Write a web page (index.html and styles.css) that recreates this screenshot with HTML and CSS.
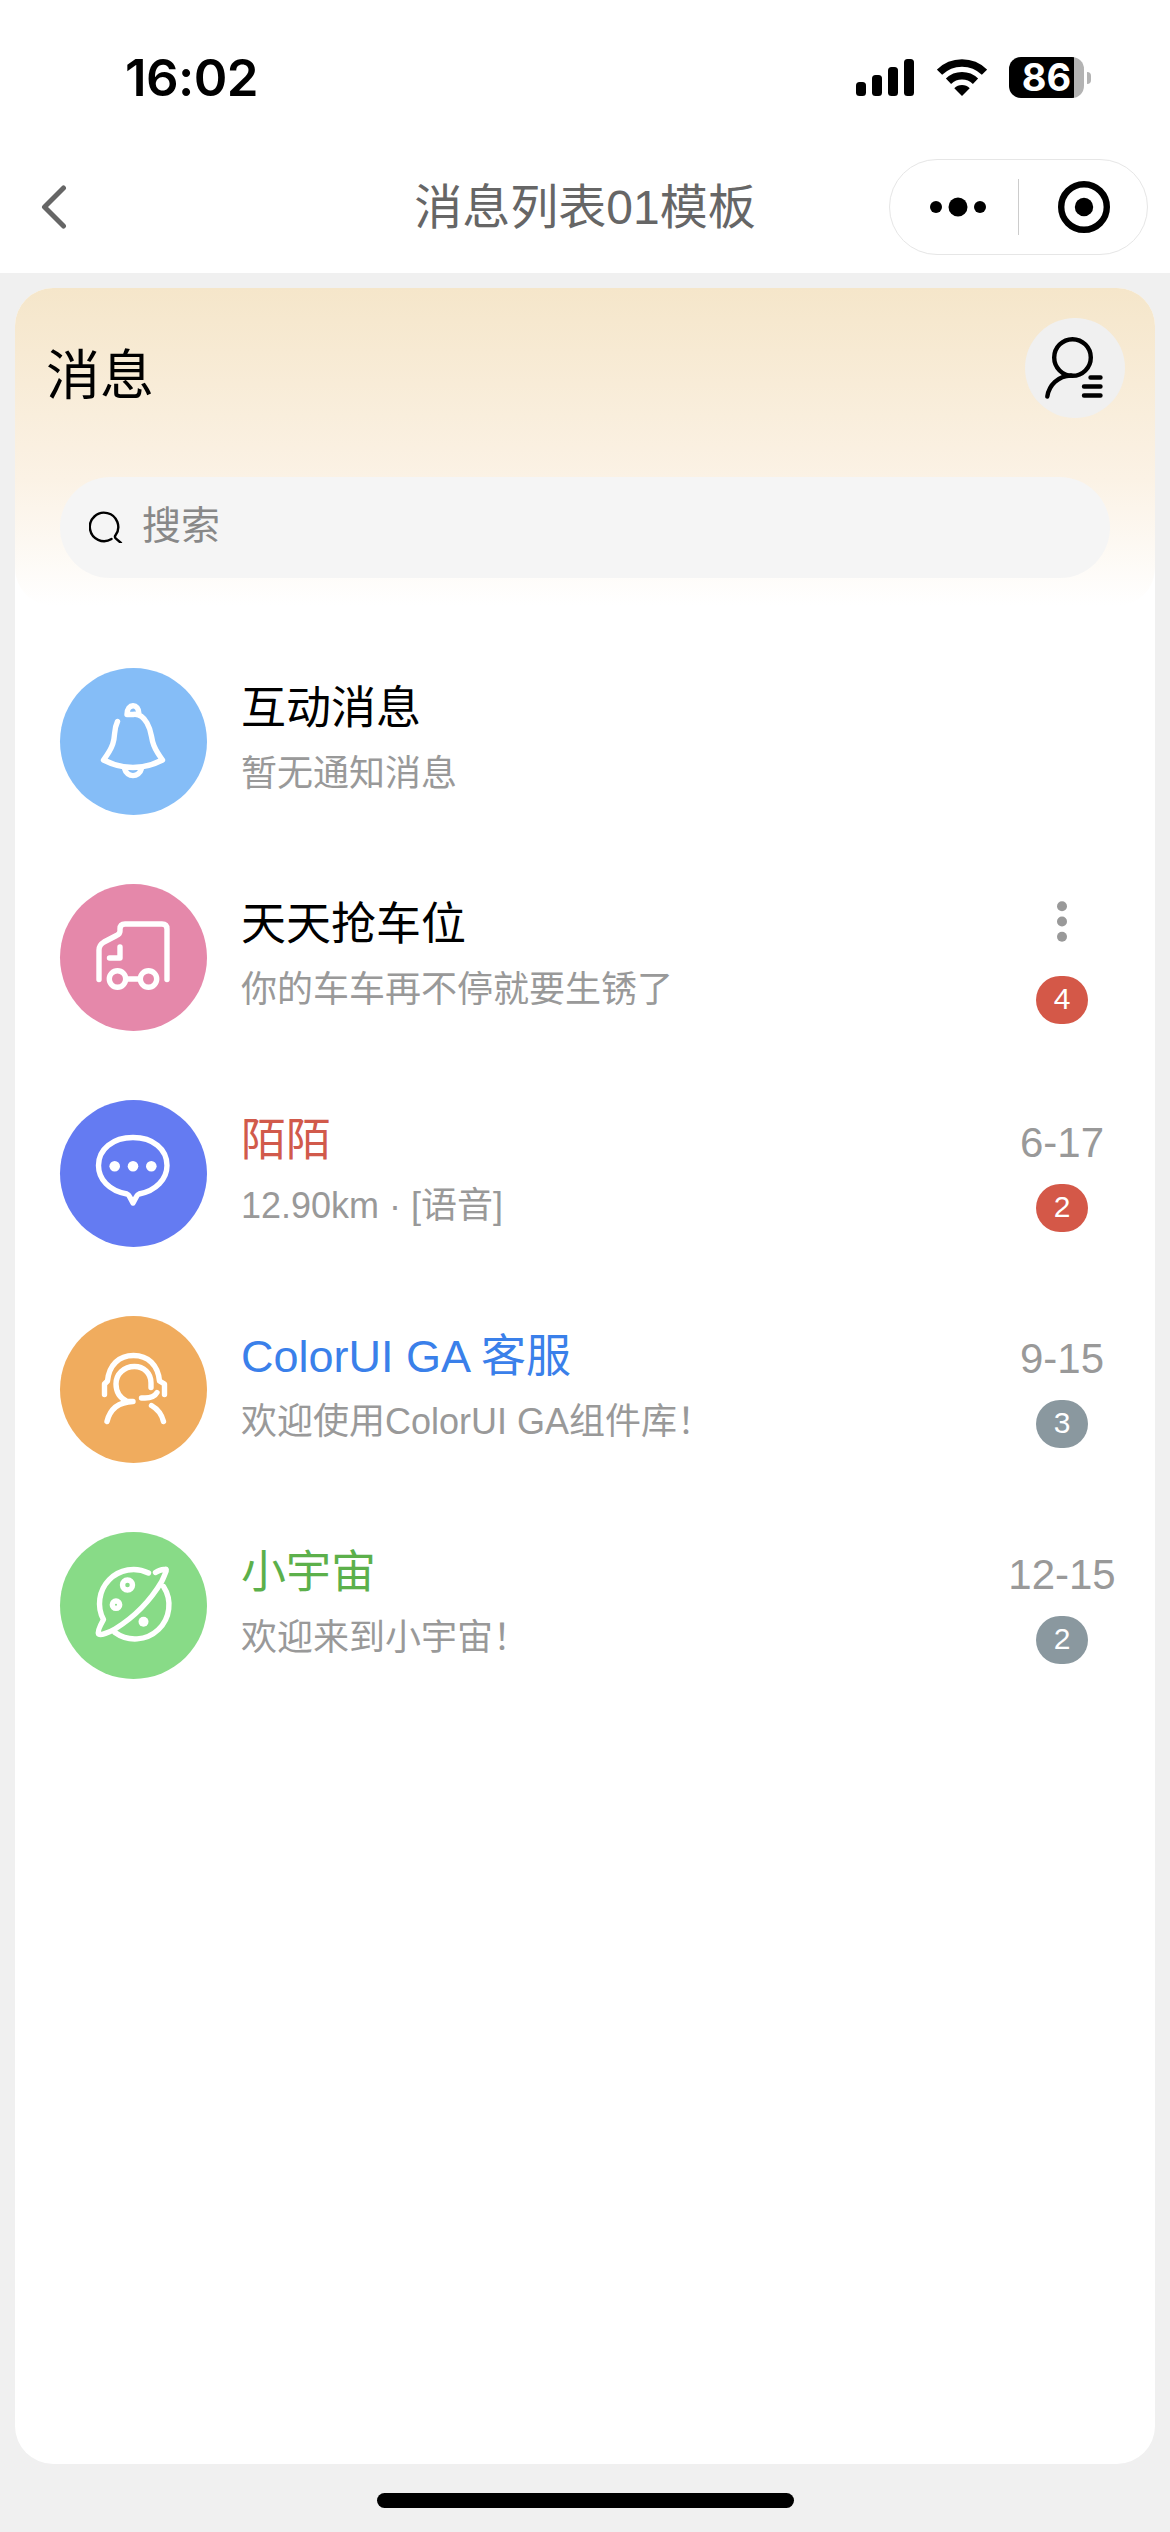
FILE: index.html
```html
<!DOCTYPE html>
<html lang="zh-CN">
<head>
<meta charset="utf-8">
<meta name="viewport" content="width=device-width, initial-scale=1">
<title>消息列表01模板</title>
<link rel="stylesheet" href="styles.css">
</head>
<body>
<div class="app">
  <header class="top">
    <div class="status-bar">
      <span class="clock">16:02</span>
      <div class="status-icons">
        <svg class="signal" width="58" height="37" viewBox="0 0 58 37"><rect y="23" width="10" height="14" rx="3.5"/><rect x="16" y="16" width="10" height="21" rx="3.5"/><rect x="32" y="8" width="10" height="29" rx="3.5"/><rect x="48" width="10" height="37" rx="3.5"/></svg>
        <svg class="wifi" width="50" height="37" viewBox="0 0 50 37"><g fill="none" stroke="#000" stroke-width="7.5"><path d="M2.5 13.2A32 32 0 0 1 47.5 13.2"/><path d="M11.5 22.3A19.5 19.5 0 0 1 38.5 22.3"/></g><path d="M25 37L17.3 29.2A11 11 0 0 1 32.7 29.2Z"/></svg>
        <div class="battery"><span class="battery-body">86</span><span class="battery-tip"></span></div>
      </div>
    </div>
    <div class="nav-bar">
      <svg class="back" width="26" height="46" viewBox="0 0 26 46"><path d="M22.5 4L3.5 23L22.5 42"/></svg>
      <h1 class="nav-title">消息列表01模板</h1>
      <div class="capsule">
        <svg class="more" width="52" height="22" viewBox="0 0 52 22"><circle cx="4" cy="11" r="6"/><circle cx="26" cy="11" r="9.5"/><circle cx="48" cy="11" r="6"/></svg>
        <span class="divider"></span>
        <svg class="target" width="52" height="52" viewBox="0 0 52 52"><circle cx="26" cy="26" r="22.8" fill="none" stroke="#000" stroke-width="6.4"/><circle cx="26" cy="26" r="9.2"/></svg>
      </div>
    </div>
  </header>

  <main class="card">
    <section class="banner">
      <div class="banner-row">
        <h2 class="banner-title">消息</h2>
        <div class="contact">
          <svg width="100" height="100" viewBox="0 0 100 100"><circle cx="47.5" cy="39.5" r="18.3"/><path d="M46 57.5C33 58 24 67 22.3 78.5M65.500 59.500H75.500M59 68.500H75.500M59 77.500H75.500"/></svg>
        </div>
      </div>
      <div class="search">
        <svg width="34" height="34" viewBox="0 0 34 34"><path d="M22.500 30A14.200 14.200 0 1 1 26.500 26.300Q25.200 28 27 29.700L32 34"/></svg>
        <span>搜索</span>
      </div>
    </section>

    <ul class="list">
      <li class="item">
        <span class="icon blue"><svg viewBox="0 0 147 147"><path d="M57.500 53.500C51 67 60 70 43.500 92Q73 107 102.500 92C87 71 95 69 87 55Q81 45 73 46.500H67C67 35 79 35 79 46M64.500 100.500C67 110 79 110 81.500 100.500"/></svg></span>
        <div class="body"><h3>互动消息</h3><p>暂无通知消息</p></div>
      </li>
      <li class="item">
        <span class="icon pink"><svg viewBox="0 0 147 147"><path d="M39 95.500V66Q39 61 44 58L56.500 51.500Q60 50 60 47V45Q60 40 65 40H102Q107 40 107 45V95.500M60 63V74H49.500M68 95H78"/><circle cx="57.500" cy="95" r="8.200"/><circle cx="88.500" cy="95" r="8.200"/></svg></span>
        <div class="body"><h3>天天抢车位</h3><p>你的车车再不停就要生锈了</p></div>
        <div class="meta"><svg class="dots" width="10" height="41" viewBox="0 0 10 41"><circle cx="5" cy="5.300" r="5"/><circle cx="5" cy="20.500" r="5"/><circle cx="5" cy="35.700" r="5"/></svg><span class="badge red">4</span></div>
      </li>
      <li class="item">
        <span class="icon indigo"><svg viewBox="0 0 147 147"><path d="M67 94C49 91 38.500 79 38.500 65.500C38.500 49 53 37.500 73 37.500S107 49 107 65.500C107 79 96 91 79 94Q77.500 94.500 76.500 96.500L73 103L69.500 96.500Q68.500 94.500 67 94Z"/><g class="solid"><circle cx="54.700" cy="66.200" r="5.300"/><circle cx="73" cy="66.200" r="5.300"/><circle cx="91.300" cy="66.200" r="5.300"/></g></svg></span>
        <div class="body"><h3 class="t-red">陌陌</h3><p>12.90km · [语音]</p></div>
        <div class="meta"><time>6-17</time><span class="badge red">2</span></div>
      </li>
      <li class="item">
        <span class="icon orange"><svg viewBox="0 0 147 147"><path d="M44.500 78.500V68L47.500 65C49 49 59 39.500 73.500 39.500S98 49 99.500 65L104.500 68V78.500M91 71.500V67C91 57 83.500 50.500 74.500 50.500C64 50.500 56 58 56 68C56 76 60 82 67 85.500H73M47 105.500C50 93 59 86 73 85.500M81.500 82H85Q94 82 97 76.500M91.500 89.500Q101 95 103.500 105.500"/></svg></span>
        <div class="body"><h3 class="t-blue">ColorUI GA 客服</h3><p>欢迎使用ColorUI GA组件库！</p></div>
        <div class="meta"><time>9-15</time><span class="badge grey">3</span></div>
      </li>
      <li class="item">
        <span class="icon green"><svg viewBox="0 0 147 147"><path d="M88.500 41A34 34 0 0 0 43.500 87.500C41 92 37 99 38.500 102C40 104 50 100 55 97C76 84 92 66 102 49C106 40 108 36 104.500 37.500C101 37 98.500 38.500 95.500 40.500M103.500 54.500A34 34 0 0 1 55 100.500"/><circle cx="67.500" cy="53" r="5"/><circle cx="56" cy="72.700" r="3.700"/><circle class="solid" cx="83.500" cy="89.800" r="5"/></svg></span>
        <div class="body"><h3 class="t-green">小宇宙</h3><p>欢迎来到小宇宙！</p></div>
        <div class="meta"><time>12-15</time><span class="badge grey">2</span></div>
      </li>
    </ul>
  </main>
  <footer class="home"><span class="home-indicator"></span></footer>
</div>
</body>
</html>
```

FILE: styles.css
```css
* { box-sizing: border-box; margin: 0; padding: 0; }
body {
  background: #f0f0f0;
  font-family: "Liberation Sans", "Noto Sans CJK SC", sans-serif;
}
svg { display: block; flex: none; }
h1, h2, h3 { font-weight: 400; }

.app { display: flex; flex-direction: column; width: 1170px; height: 2532px; overflow: hidden; }

.top { height: 273px; background: #fff; }
.status-bar { display: flex; justify-content: space-between; height: 141px; padding: 57px 79px 0 125px; }
.clock { font: 600 51px/42px Inter, sans-serif; letter-spacing: -0.6px; }
.status-icons { display: flex; align-items: flex-start; }
.signal { margin: 2px 23px 0 0; }
.wifi { margin: 2px 22px 0 0; }
.battery { display: flex; align-items: center; gap: 3px; }
.battery-body {
  width: 75px; height: 41px; border-radius: 12px;
  background: linear-gradient(90deg, #000 65px, #b3b3b3 65px);
  color: #fff; font: 700 38px/41px Inter, sans-serif; text-align: center;
}
.battery-tip { width: 4px; height: 12px; border-radius: 0 4px 4px 0; background: #b3b3b3; }

.nav-bar { display: grid; grid-template-columns: 1fr auto 1fr; align-items: center; height: 132px; padding: 0 22px; }
.back { margin-left: 19px; fill: none; stroke: #666; stroke-width: 5; stroke-linecap: round; stroke-linejoin: round; }
.nav-title { padding-top: 2px; font-size: 48px; line-height: 60px; color: #666; }
.capsule {
  display: flex; align-items: center; justify-self: end;
  width: 259px; height: 96px; padding: 0 37px 0 42px;
  border: 1px solid #e6e6e6; border-radius: 48px;
}
.more { overflow: visible; }
.divider { width: 1px; height: 56px; margin: 0 auto 0 34px; background: #ccc; }

.card { flex: none; height: 2176px; margin: 15px 15px 0; border-radius: 38px; background: #fff; }
.banner { height: 318px; padding: 30px 30px 0; border-radius: 38px; background: linear-gradient(#f5e6ca, #fbf2e5 60%, #fff); }
.banner-row { display: flex; justify-content: space-between; height: 159px; }
.banner-title { padding: 3px 0 0 1px; font-size: 54px; line-height: 110px; color: #000; }
.contact { width: 100px; height: 100px; border-radius: 50%; background: #f0f0f0; }
.contact svg { fill: none; stroke: #000; stroke-width: 4.4; stroke-linecap: round; }
.search {
  display: flex; align-items: center; gap: 19px; height: 101px;
  margin: 0 15px; padding: 0 0 3px 29px; border-radius: 51px;
  background: #f5f5f5; color: #888; font-size: 39px; line-height: 50px;
}
.search svg { fill: none; stroke: #000; stroke-width: 2.4; stroke-linecap: round; }

.list { display: flex; flex-direction: column; gap: 69px; padding: 62px 45px 0; list-style: none; }
.item { display: flex; align-items: flex-start; height: 147px; }
.icon { flex: none; width: 147px; height: 147px; border-radius: 50%; }
.icon svg { fill: none; stroke: #fff; stroke-width: 5.4; stroke-linecap: round; stroke-linejoin: round; }
.icon .solid { fill: #fff; stroke: none; }
.blue { background: #85bdf7; }
.pink { background: #e588aa; }
.indigo { background: #647bf2; }
.orange { background: #f0ac5e; }
.green { background: #88db87; }

.body { flex: 1; padding: 9px 0 0 34px; white-space: nowrap; }
.body h3 { font-size: 45px; line-height: 64px; color: #000; }
.body p { font-size: 36px; line-height: 52px; margin-top: 7px; color: #999; }
.body .t-red { color: #d15a4b; }
.body .t-blue { color: #3a80ea; }
.body .t-green { color: #5cb04b; }

.meta { display: flex; flex-direction: column; align-items: center; width: 110px; margin-right: -7px; padding-top: 17px; }
.meta time { height: 67px; font-size: 42px; line-height: 51px; color: #999; }
.dots { margin-bottom: 34px; fill: #999; }
.badge { width: 52px; height: 48px; border-radius: 24px; color: #fff; font-size: 30px; line-height: 46px; text-align: center; }
.red { background: #d45848; }
.grey { background: #8a989f; }

.home { display: flex; justify-content: center; padding-top: 29px; }
.home-indicator { width: 417px; height: 15px; border-radius: 8px; background: #000; }
```
